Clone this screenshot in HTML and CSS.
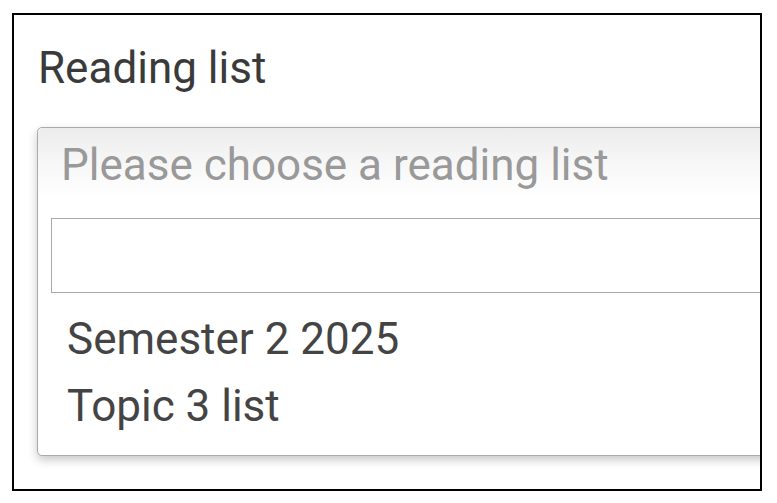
FILE: index.html
```html
<!DOCTYPE html>
<html>
<head>
<meta charset="utf-8">
<link rel="stylesheet" href="styles.css">
</head>
<body>
<div class="frame">
  <div class="label">Reading list</div>
  <div class="dropdown">
    <div class="chosen">Please choose a reading list</div>
    <div class="search"><div class="search-input"></div></div>
    <ul class="results">
      <li>Semester 2 2025</li>
      <li>Topic 3 list</li>
    </ul>
  </div>
</div>
</body>
</html>
```
FILE: styles.css
```css
html, body {
  margin: 0;
  padding: 0;
  background: #fff;
}
body {
  font-family: Roboto, "Liberation Sans", sans-serif;
}
.frame {
  margin: 13px 0 0 12px;
  width: 723px;
  height: 474px;
  border: 2px solid #000;
  overflow: hidden;
  padding: 0 0 0 23px;
}
.label {
  font-size: 44px;
  line-height: 50px;
  color: #3a3a3a;
  padding-top: 28px;
  padding-left: 1px;
}
.dropdown {
  width: 800px;
  border: 1px solid #aaa;
  border-radius: 5px;
  background: #fff;
  box-shadow: 0 4px 10px rgba(0, 0, 0, 0.22);
  margin-top: 34px;
}
.chosen {
  height: 70px;
  padding: 5px 0 0 23px;
  box-sizing: border-box;
  font-size: 44px;
  line-height: 65px;
  color: #999;
  background: linear-gradient(to bottom, #ececec 0%, #f7f7f7 50%, #fff 100%);
  border-radius: 5px 5px 0 0;
}
.search {
  padding: 20px 0 0 13px;
}
.search-input {
  height: 73px;
  border: 1px solid #aaa;
  background: #fff;
}
.results {
  list-style: none;
  margin: 0;
  padding: 13px 0 15px 29px;
  font-size: 44px;
  line-height: 67px;
  color: #444;
}
```
